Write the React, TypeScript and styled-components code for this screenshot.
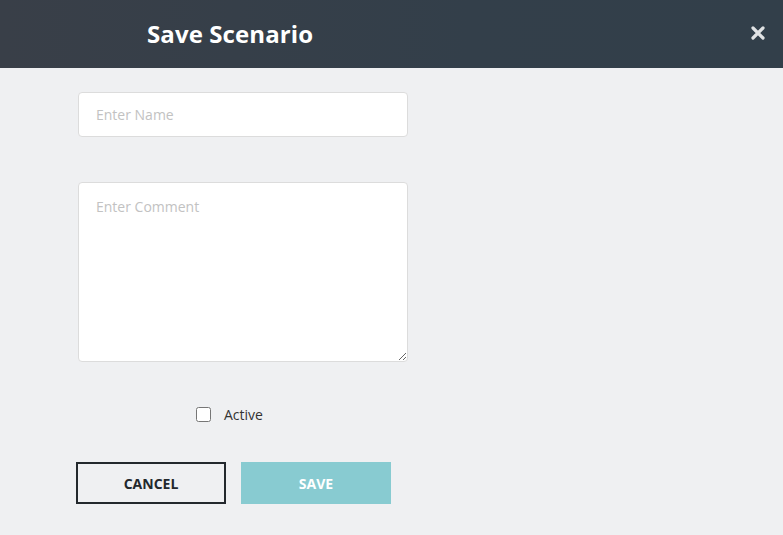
import React from "react";
import styled, { createGlobalStyle } from "styled-components";

const Global = createGlobalStyle`
  html, body {
    margin: 0;
    padding: 0;
    background: #eff0f2;
    font-family: "Open Sans", "Noto Sans", sans-serif;
  }
`

const Page = styled.div`
  width: 783px;
  height: 535px;
  background: #eff0f2;
  display: flex;
  flex-direction: column;
`

const Header = styled.div`
  height: 68px;
  background: linear-gradient(90deg, #393f48 0%, #333f4a 60%, #323f4a 100%);
  display: flex;
  align-items: center;
  justify-content: space-between;
  padding: 0 16px 2px 147px;
  box-sizing: border-box;
`

const Title = styled.h1`
  margin: 0;
  color: #ffffff;
  font-size: 24px;
  font-weight: 700;
  letter-spacing: 0.1px;
`

const Close = styled.button`
  border: none;
  background: none;
  padding: 0;
  width: 18px;
  height: 18px;
  display: flex;
  align-items: center;
  justify-content: center;
  cursor: pointer;
`

const Body = styled.div`
  display: flex;
  flex-direction: column;
  padding: 24px 0 0 78px;
`

const Field = styled.input`
  width: 330px;
  height: 45px;
  box-sizing: border-box;
  border: 1px solid #dcdcdc;
  border-radius: 4px;
  background: #fff;
  padding: 0 17px;
  font-family: inherit;
  font-size: 14px;
  color: #333;
  outline: none;
  &::placeholder { color: #c2c2c2; }
`

const Comment = styled.textarea`
  width: 330px;
  height: 180px;
  margin-top: 45px;
  box-sizing: border-box;
  border: 1px solid #dcdcdc;
  border-radius: 4px;
  background: #fff;
  padding: 14px 17px;
  font-family: inherit;
  font-size: 14px;
  color: #333;
  outline: none;
  resize: vertical;
  &::placeholder { color: #c2c2c2; }
`

const CheckRow = styled.label`
  display: flex;
  align-items: center;
  gap: 13px;
  margin: 43px 0 0 118px;
  font-size: 14px;
  color: #333;
`

const Box = styled.input`
  width: 15px;
  height: 15px;
  margin: 0;
`

const Buttons = styled.div`
  display: flex;
  gap: 15px;
  margin: 38px 0 0 -2px;
`

const Button = styled.button<{primary?: boolean}>`
  width: 150px;
  height: 42px;
  box-sizing: border-box;
  font-family: inherit;
  font-size: 14px;
  font-weight: 700;
  text-transform: uppercase;
  border: ${({primary}) => primary ? 'none' : '2px solid #23282d'};
  background: ${({primary}) => primary ? '#88cbd1' : '#eff0f2'};
  color: ${({primary}) => primary ? '#fff' : '#23282d'};
  cursor: pointer;
`

export default function App() {
  return (
    <Page>
      <Global />
      <Header>
        <Title>Save Scenario</Title>
        <Close aria-label="close">
          <svg width="14" height="14" viewBox="0 0 14 14">
            <path d="M2 2 L12 12 M12 2 L2 12" stroke="#e0e2e4" strokeWidth="3.2" strokeLinecap="round" />
          </svg>
        </Close>
      </Header>
      <Body>
        <Field placeholder="Enter Name" />
        <Comment placeholder="Enter Comment" />
        <CheckRow>
          <Box type="checkbox" />
          Active
        </CheckRow>
        <Buttons>
          <Button>Cancel</Button>
          <Button primary>Save</Button>
        </Buttons>
      </Body>
    </Page>
  )
}
